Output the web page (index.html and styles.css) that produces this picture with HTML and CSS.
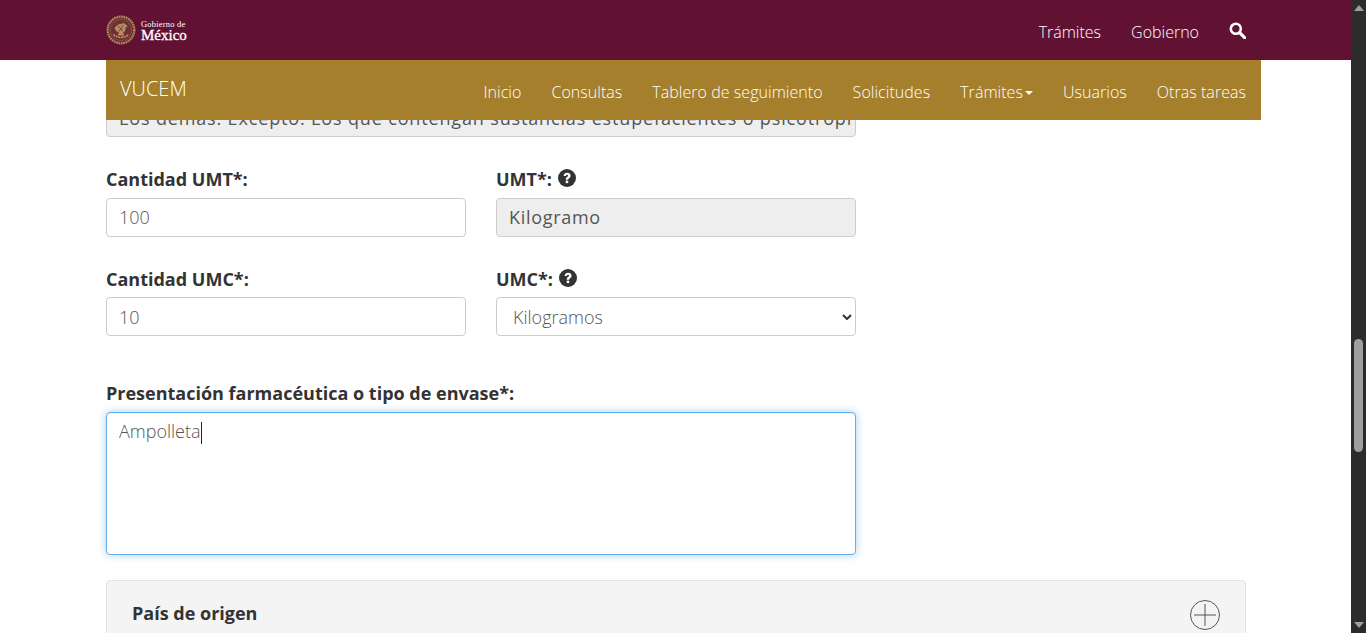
FILE: index.html
```html
<!DOCTYPE html>
<html lang="es">
<head>
    <meta charset="UTF-8" />
    <title>VUCEM</title>
    <link rel="stylesheet" href="styles.css">
</head>
<body>

<div class="page">
    <div class="topbar">
        <div class="topbar-inner">
            <a class="logo">
                <svg class="logo-seal" width="30" height="30" viewBox="0 0 30 30">
                    <circle cx="15" cy="15" r="14.500" fill="#6f2f36"/>
                    <circle cx="15" cy="15" r="13.300" fill="none" stroke="#b58a5e" stroke-width="2.200" stroke-dasharray="1.600 .8"/>
                    <circle cx="15" cy="15" r="10.500" fill="none" stroke="#a07250" stroke-width="1" stroke-dasharray="1 1"/>
                    <path d="M8.500 12.500c2-1 3-3.500 6-3.500 2 0 2.500-1 4-.5 1 1 2.500 1.500 3 3-1.500 0-2 1-2 2.500 0 2-1 3-2.500 3.500l1.500 3h-7l1.500-3c-2.500-.5-4-2.500-4.500-5z" fill="#b48c62"/>
                    <path d="M12 11l5 5M17 10.500l-4 6" stroke="#6f2f36" stroke-width=".8"/>
                    <path d="M7.500 19.500c4 4 11 4 15 0" fill="none" stroke="#c09a6c" stroke-width="1.500" stroke-dasharray="2 .7"/>
                </svg>
                <span class="logo-text"><small>Gobierno de</small><b>México</b></span>
            </a>
            <nav class="topnav">
                <a>Trámites</a>
                <a>Gobierno</a>
                <svg class="search" width="17" height="17" viewBox="0 0 17 17">
                    <circle cx="6.8" cy="6.8" r="5" fill="none" stroke="#fff" stroke-width="2.6"/>
                    <path d="M10.6 10.6l5 5" stroke="#fff" stroke-width="3.2" stroke-linecap="round"/>
                </svg>
            </nav>
        </div>
    </div>

    <div class="subbar">
        <span class="brand">VUCEM</span>
        <nav class="subnav">
            <a>Inicio</a>
            <a>Consultas</a>
            <a>Tablero de seguimiento</a>
            <a>Solicitudes</a>
            <a>Trámites<i class="caret"></i></a>
            <a>Usuarios</a>
            <a>Otras tareas</a>
        </nav>
    </div>

    <div class="content">
        <div class="field-wide cut">
            <div class="control disabled long">Los demas: Excepto: Los que contengan sustancias estupefacientes o psicotropi</div>
        </div>

        <div class="row row-umt">
            <div class="field">
                <label>Cantidad UMT*:</label>
                <div class="control">100</div>
            </div>
            <div class="field">
                <label>UMT*: <svg class="help" viewBox="0 0 24 24"><circle cx="12" cy="12" r="12" fill="#333"/><path d="M7.500 9.300c.2-2.800 2.100-4.300 4.700-4.300 2.700 0 4.600 1.600 4.600 4 0 3.200-3.200 3.200-3.200 5.300h-3.300c0-3.700 3.100-3.700 3.100-5.200 0-.8-.5-1.300-1.300-1.300-.9 0-1.400.6-1.500 1.500z" fill="#fff"/><rect x="10.300" y="15.500" width="3.300" height="3.300" fill="#fff"/></svg></label>
                <div class="control disabled">Kilogramo</div>
            </div>
        </div>

        <div class="row row-umc">
            <div class="field">
                <label>Cantidad UMC*:</label>
                <div class="control">10</div>
            </div>
            <div class="field">
                <label>UMC*: <svg class="help" viewBox="0 0 24 24"><circle cx="12" cy="12" r="12" fill="#333"/><path d="M7.500 9.300c.2-2.800 2.100-4.300 4.700-4.300 2.700 0 4.600 1.600 4.600 4 0 3.200-3.200 3.200-3.200 5.300h-3.300c0-3.700 3.100-3.700 3.100-5.200 0-.8-.5-1.300-1.300-1.300-.9 0-1.400.6-1.500 1.500z" fill="#fff"/><rect x="10.300" y="15.500" width="3.300" height="3.300" fill="#fff"/></svg></label>
                <div class="control select">
                    <span>Kilogramos</span>
                    <svg width="10" height="6" viewBox="0 0 10 6"><path d="M1 1l4 4 4-4" fill="none" stroke="#333" stroke-width="2"/></svg>
                </div>
            </div>
        </div>

        <div class="field-wide presentacion">
            <label>Presentación farmacéutica o tipo de envase*:</label>
            <div class="control area"><span>Ampolleta</span><i class="cursor"></i></div>
        </div>

        <div class="panel">
            <span class="panel-title">País de origen</span>
            <svg class="plus" width="30" height="30" viewBox="0 0 30 30">
                <circle cx="15" cy="15" r="14.500" fill="none" stroke="#555"/>
                <path d="M15 4v22M4 15h22" stroke="#555"/>
            </svg>
        </div>
    </div>
</div>

<div class="scrollbar">
    <div class="arrow up"></div>
    <div class="track"><div class="thumb"></div></div>
    <div class="arrow down"></div>
</div>

</body>
</html>
```

FILE: styles.css
```css
html, body {
    height: 100%;
}
body {
    margin: 0;
    display: flex;
    height: 633px;
    overflow: hidden;
    font-family: "Open Sans", sans-serif;
    font-size: 16px;
    color: #333;
    background-color: #fff;
}
.page {
    flex: 1;
    min-width: 0;
    overflow: hidden;
}
.topbar {
    height: 60px;
    background-color: #611232;
    position: relative;
    z-index: 2;
}
.topbar-inner {
    width: 1140px;
    height: 60px;
    margin-left: 106px;
    display: flex;
    align-items: center;
    justify-content: space-between;
}
.logo {
    display: flex;
    align-items: center;
    gap: 5px;
}
.logo-text {
    display: flex;
    flex-direction: column;
    font-family: "Liberation Serif", serif;
    color: #fff;
    line-height: 1;
}
.logo-text small {
    font-size: 8.5px;
    line-height: 9px;
    letter-spacing: 0.2px;
}
.logo-text b {
    font-size: 15px;
    line-height: 12px;
    font-weight: 400;
    -webkit-text-stroke: 0.3px #fff;
}
.topnav {
    display: flex;
    align-items: center;
    gap: 30px;
    color: #fff;
    font-weight: 300;
}
.topnav a {
    line-height: 24px;
    position: relative;
    top: 2px;
}
.subbar {
    width: 1155px;
    height: 60px;
    margin-left: 106px;
    background-color: #a57f2c;
    display: flex;
    align-items: center;
    justify-content: space-between;
    position: relative;
    z-index: 2;
    color: #fff;
    font-weight: 300;
}
.brand {
    font-size: 20px;
    margin-left: 14px;
    margin-top: -3px;
}
.subnav {
    display: flex;
    gap: 30px;
    margin-right: 15px;
    margin-top: 3px;
    letter-spacing: 0.04px;
}
.caret {
    display: inline-block;
    border-top: 4px solid #fff;
    border-left: 4px solid transparent;
    border-right: 4px solid transparent;
    margin-left: 2px;
    vertical-align: middle;
}
.content {
    width: 1140px;
    margin-left: 106px;
    margin-top: -22px;
}
.field-wide {
    width: 750px;
}
.row {
    width: 750px;
    display: flex;
    gap: 30px;
}
.field {
    width: 360px;
}
.row-umt {
    margin-top: 31px;
}
.row-umc {
    margin-top: 31px;
}
.row-umc label {
    margin-bottom: 7px;
}
.row-umc .control {
    line-height: 39px;
}
.presentacion {
    margin-top: 46px;
}
label {
    display: block;
    font-size: 18px;
    font-weight: 700;
    line-height: 22px;
    margin-bottom: 8px;
    color: #333;
}
.help {
    width: 18px;
    height: 18px;
    margin-left: 1px;
    vertical-align: -1px;
}
.control {
    box-sizing: border-box;
    height: 39px;
    padding: 0 12px;
    border: 1px solid #ccc;
    border-radius: 4px;
    font-size: 18px;
    font-weight: 300;
    line-height: 37px;
    color: #555;
    background-color: #fff;
    white-space: nowrap;
    overflow: hidden;
}
.disabled {
    background-color: #eee;
    font-weight: 400;
    letter-spacing: 0.7px;
}
.long {
    padding-right: 0;
    line-height: 39px;
    letter-spacing: 0.85px;
}
.select {
    display: flex;
    align-items: center;
    justify-content: space-between;
    padding: 0 3px 0 16px;
}
.select span {
    padding-top: 2px;
}
.area {
    height: 143px;
    border-color: #66afe9;
    box-shadow: inset 0 1px 1px rgba(0, 0, 0, 0.075), 0 0 8px rgba(102, 175, 233, 0.6);
    overflow: visible;
    line-height: 36px;
}
.cursor {
    display: inline-block;
    width: 1px;
    height: 22px;
    background-color: #222;
    vertical-align: -6px;
}
.panel {
    box-sizing: border-box;
    height: 80px;
    margin-top: 25px;
    padding: 19px 25px;
    background-color: #f4f4f4;
    border: 1px solid #e3e3e3;
    border-radius: 4px;
    display: flex;
    justify-content: space-between;
    align-items: flex-start;
}
.panel-title {
    font-size: 18px;
    font-weight: 700;
    line-height: 26px;
}
.scrollbar {
    width: 15px;
    height: 633px;
    background-color: #2c2c2c;
    display: flex;
    flex-direction: column;
    align-items: center;
}
.track {
    flex: 1;
    width: 100%;
    padding-top: 323px;
}
.thumb {
    width: 9px;
    height: 113px;
    margin: 0 auto;
    background-color: #9f9f9f;
    border-radius: 5px;
}
.arrow {
    width: 0;
    height: 0;
    border-left: 5px solid transparent;
    border-right: 5px solid transparent;
    margin: 5px 0;
}
.up {
    border-bottom: 6px solid #9f9f9f;
}
.down {
    border-top: 6px solid #9f9f9f;
}
```
